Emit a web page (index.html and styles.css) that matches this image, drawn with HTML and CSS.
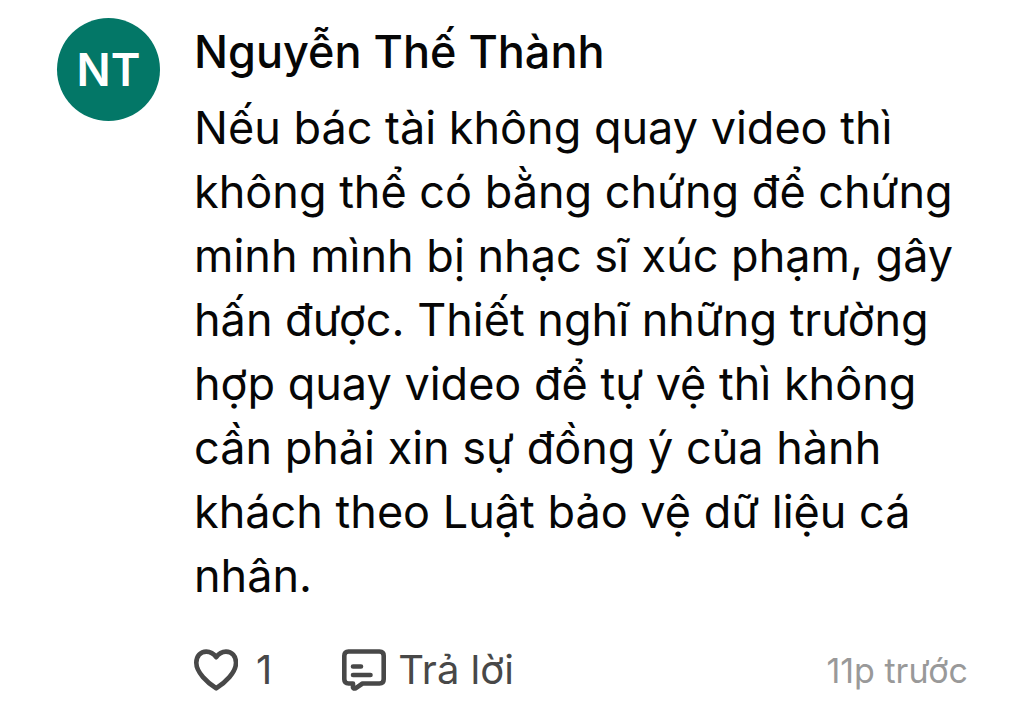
FILE: index.html
```html
<!DOCTYPE html>
<html lang="vi">
<head>
<meta charset="utf-8">
<meta name="viewport" content="width=device-width, initial-scale=1">
<title>Bình luận</title>
<link rel="stylesheet" href="styles.css">
</head>
<body>
<article class="comment">
  <div class="avatar">NT</div>
  <div class="body">
    <h2 class="author">Nguyễn Thế Thành</h2>
    <p class="text">Nếu bác tài không quay video thì không thể có bằng chứng để chứng minh mình bị nhạc sĩ xúc phạm, gây hấn được. Thiết nghĩ những trường hợp quay video để tự vệ thì không cần phải xin sự đồng ý của hành khách theo Luật bảo vệ dữ liệu cá nhân.</p>
    <footer class="actions">
      <button class="action like" type="button" aria-label="Thích, 1">
        <svg class="icon" width="44" height="42" viewBox="0 0 44 42" aria-hidden="true"><path d="M22.200 39.300C13.500 33.800 2.300 23.500 2.300 13.800C2.300 7 6.500 2.600 12.300 2.600C17 2.600 20 5 22.200 8.200C24.400 5 27.500 2.600 32 2.600C37.800 2.600 42 7 42 13.800C42 23.500 31 33.800 22.200 39.300Z"/></svg>
        <span>1</span>
      </button>
      <button class="action reply" type="button">
        <svg class="icon" width="44" height="42" viewBox="0 0 44 42" aria-hidden="true"><path d="M6.500 2.500H37.500Q41.700 2.500 41.700 6.700V30.300Q41.700 34.500 37.500 34.500H20.500L13.500 39.300Q11.500 40 11 38.500V34.500H6.500Q2.300 34.500 2.300 30.300V6.700Q2.300 2.500 6.500 2.500ZM11 17.500H19M11 26H28.500"/></svg>
        <span>Trả lời</span>
      </button>
      <time class="time">11p trước</time>
    </footer>
  </div>
</article>
</body>
</html>
```
FILE: styles.css
```css
body {
  margin: 0;
  background: #fff;
  color: #060606;
  font-family: Inter, "Liberation Sans", sans-serif;
}
.comment {
  display: flex;
  gap: 34px;
  padding: 18px 56px 24px 57px;
}
.avatar {
  display: flex;
  flex: none;
  align-items: center;
  justify-content: center;
  width: 103px;
  height: 103px;
  border-radius: 50%;
  background: #037767;
  color: #fff;
  font-size: 45px;
  font-weight: 600;
}
.body {
  flex: 1;
  min-width: 0;
}
.author {
  margin: 0;
  font-size: 45px;
  font-weight: 500;
  line-height: 68px;
}
.text {
  margin: 10px 0 0;
  font-size: 45px;
  line-height: 64px;
}
.actions {
  display: flex;
  align-items: center;
  gap: 70px;
  margin-top: 34px;
}
.action {
  display: flex;
  align-items: center;
  padding: 0;
  border: 0;
  background: none;
  color: #484848;
  font: inherit;
  font-size: 40px;
  line-height: 56px;
  cursor: pointer;
}
.like {
  gap: 18px;
}
.reply {
  gap: 12px;
}
.icon {
  fill: none;
  stroke: #484848;
  stroke-width: 4.600;
  stroke-linejoin: round;
  stroke-linecap: round;
}
.time {
  margin-left: auto;
  color: #999;
  font-size: 34px;
}
```
